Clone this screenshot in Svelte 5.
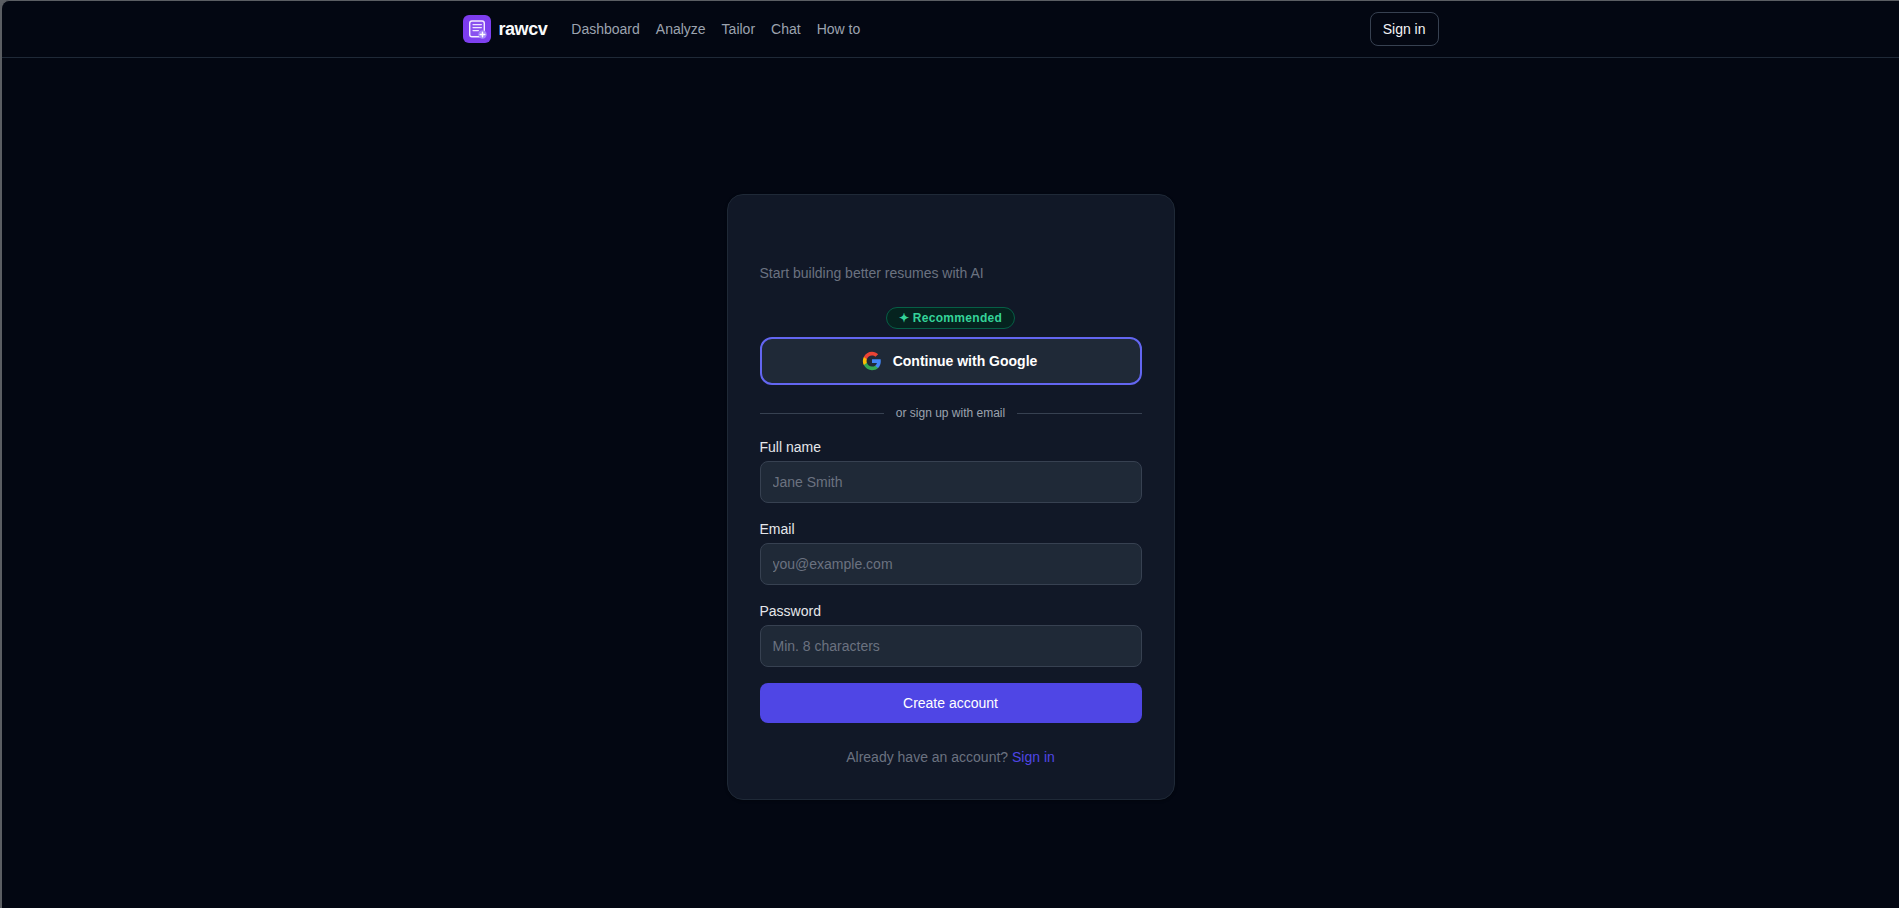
<script lang="ts">
  const links = ["Dashboard", "Analyze", "Tailor", "Chat", "How to"];

  const fields = [
    { id: "name", label: "Full name", type: "text", placeholder: "Jane Smith" },
    { id: "email", label: "Email", type: "email", placeholder: "you@example.com" },
    { id: "password", label: "Password", type: "password", placeholder: "Min. 8 characters" },
  ];

  function onSubmit(event: SubmitEvent) {
    event.preventDefault();
  }
</script>

<div class="page">
  <header class="topbar">
    <div class="topbar-inner">
      <a class="brand" href="#home">
        <svg class="brand-mark" viewBox="0 0 28 28" aria-hidden="true">
          <defs>
            <linearGradient id="brand-fill" x1="0" y1="0" x2="1" y2="1">
              <stop offset="0" stop-color="#7c3aed" />
              <stop offset="1" stop-color="#7f42f0" />
            </linearGradient>
          </defs>
          <rect width="28" height="28" rx="6" fill="url(#brand-fill)" />
          <rect x="6.7" y="6" width="14.6" height="15.8" rx="2.2" fill="#fff" fill-opacity="0.1" stroke="#f3ecff" stroke-width="1.4" />
          <path d="M10 9.6h8.4M10 12.6h8.4M10 15.6h5.4" stroke="#efe6ff" stroke-width="1.2" stroke-linecap="round" />
          <circle cx="19.5" cy="19.5" r="4.2" fill="#a78bfa" />
          <path d="M19.5 17.2v4.6M17.2 19.5h4.6" stroke="#fff" stroke-width="1.4" stroke-linecap="round" />
        </svg>
        <span class="brand-name">rawcv</span>
      </a>
      <nav class="links">
        {#each links as link}
          <a href="#{link}">{link}</a>
        {/each}
      </nav>
      <button class="signin">Sign in</button>
    </div>
  </header>

  <main class="content">
    <section class="card">
      <p class="subtitle">Start building better resumes with AI</p>

      <div class="google">
        <span class="badge">✦ Recommended</span>
        <button class="google-button">
          <svg width="20" height="20" viewBox="0 0 24 24" aria-hidden="true">
            <path fill="#4285F4" d="M22.56 12.25c0-.78-.07-1.53-.2-2.25H12v4.26h5.92c-.26 1.37-1.04 2.53-2.21 3.31v2.77h3.57c2.08-1.92 3.28-4.74 3.28-8.09z" />
            <path fill="#34A853" d="M12 23c2.97 0 5.46-.98 7.28-2.66l-3.57-2.77c-.98.66-2.23 1.06-3.71 1.06-2.86 0-5.29-1.93-6.16-4.53H2.18v2.84C3.99 20.53 7.7 23 12 23z" />
            <path fill="#FBBC05" d="M5.84 14.09c-.22-.66-.35-1.36-.35-2.09s.13-1.43.35-2.09V7.07H2.18C1.43 8.55 1 10.22 1 12s.43 3.45 1.18 4.93l3.66-2.84z" />
            <path fill="#EA4335" d="M12 5.38c1.62 0 3.06.56 4.21 1.64l3.15-3.15C17.45 2.09 14.97 1 12 1 7.7 1 3.99 3.47 2.18 7.07l3.66 2.84c.87-2.6 3.3-4.53 6.16-4.53z" />
          </svg>
          Continue with Google
        </button>
      </div>

      <div class="divider"><span>or sign up with email</span></div>

      <form onsubmit={onSubmit}>
        {#each fields as field (field.id)}
          <div class="field">
            <label for={field.id}>{field.label}</label>
            <input id={field.id} type={field.type} placeholder={field.placeholder} />
          </div>
        {/each}
        <button class="submit" type="submit">Create account</button>
      </form>

      <p class="footnote">Already have an account? <a href="#signin">Sign in</a></p>
    </section>
  </main>
</div>

<style>
  :global(body) {
    background: #5b5e63;
  }

  .page,
  .page * {
    box-sizing: border-box;
  }

  .page {
    height: 100vh;
    overflow: hidden;
    border-top: 1px solid #5b5e63;
    border-left: 2px solid #5b5e63;
    border-top-left-radius: 9px;
    color: #f9fafb;
    background: #030712;
    font-family: "Liberation Sans", Arial, sans-serif;
    font-size: 14px;
    line-height: 20px;
  }

  a {
    color: inherit;
    text-decoration: none;
  }

  p {
    margin: 0;
  }

  button,
  input {
    font: inherit;
  }

  .topbar {
    height: 57px;
    border-bottom: 1px solid #1f2937;
  }

  .topbar-inner {
    display: flex;
    align-items: center;
    width: 976px;
    height: 56px;
    margin: 0 auto;
  }

  .brand {
    display: flex;
    align-items: center;
    gap: 8px;
  }

  .brand-mark {
    width: 28px;
    height: 28px;
  }

  .brand-name {
    font-size: 18px;
    font-weight: 700;
    line-height: 28px;
    letter-spacing: -0.45px;
  }

  .links {
    display: flex;
    gap: 16px;
    margin-left: 24px;
    color: #9ca3af;
  }

  .signin {
    margin-left: auto;
    padding: 6px 12px;
    border: 1px solid #374151;
    border-radius: 8px;
    color: #f3f4f6;
    background: transparent;
  }

  .content {
    display: flex;
    justify-content: center;
    padding-top: 136px;
  }

  .card {
    width: 448px;
    height: 606px;
    padding: 68px 32px 32px;
    border: 1px solid #1f2937;
    border-radius: 16px;
    background: #111827;
    box-shadow: 0 1px 3px rgba(0, 0, 0, 0.3);
  }

  .subtitle {
    margin-bottom: 24px;
    color: #6b7280;
  }

  .google {
    display: flex;
    flex-direction: column;
    align-items: center;
    gap: 8px;
  }

  .badge {
    padding: 2px 12px;
    border: 1px solid #065f46;
    border-radius: 11px;
    color: #34d399;
    background: #05231f;
    font-size: 12px;
    font-weight: 700;
    line-height: 16px;
    letter-spacing: 0.3px;
  }

  .google-button {
    display: flex;
    align-items: center;
    justify-content: center;
    gap: 11px;
    width: 100%;
    height: 48px;
    padding: 0 2px 0 0;
    border: 2px solid #6366f1;
    border-radius: 12px;
    color: #fff;
    background: #1f2937;
    font-weight: 700;
  }

  .divider {
    display: flex;
    align-items: center;
    gap: 12px;
    margin: 20px 0 16px;
    color: #9ca3af;
    font-size: 12px;
    line-height: 16px;
  }

  .divider::before,
  .divider::after {
    content: "";
    flex: 1;
    height: 1px;
    background: #374151;
  }

  form {
    display: grid;
    gap: 16px;
  }

  .field {
    display: grid;
    gap: 4px;
  }

  label {
    color: #e5e7eb;
  }

  input {
    width: 100%;
    height: 42px;
    padding: 0 12px;
    border: 1px solid #374151;
    border-radius: 8px;
    color: #f3f4f6;
    background: #1f2937;
  }

  input::placeholder {
    color: #6b7280;
  }

  .submit {
    height: 40px;
    border: 0;
    border-radius: 8px;
    color: #fff;
    background: #4f46e5;
  }

  .footnote {
    margin-top: 24px;
    color: #6b7280;
    text-align: center;
  }

  .footnote a {
    color: #4f46e5;
  }
</style>
